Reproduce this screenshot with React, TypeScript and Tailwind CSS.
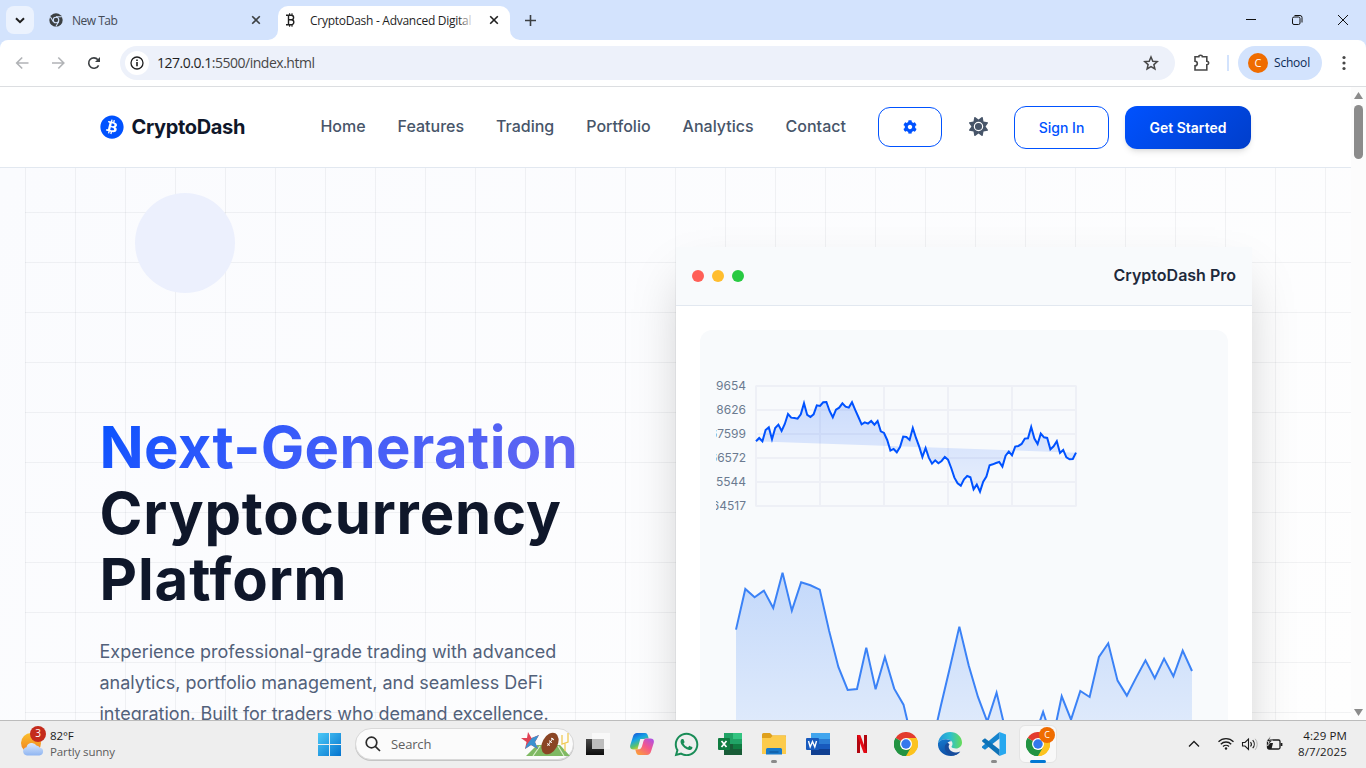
import React from "react";
import { FaBitcoin, FaCog, FaWhatsapp } from "react-icons/fa";
import { FaSun } from "react-icons/fa6";

const UI = "font-['Open_Sans','Noto_Sans',sans-serif]";

const PRICE_Y = [
  243, 233, 243, 209, 201, 237, 203, 193, 212, 191, 161, 172, 173, 175, 162, 129, 164, 170, 162, 135, 137, 126, 125,
  152, 171, 148, 142, 129, 139, 142, 126, 149, 170, 192, 186, 190, 182, 193, 182, 213, 218, 239, 271, 266, 276, 260,
  229, 230, 239, 203, 233, 259, 290, 263, 292, 310, 300, 309, 302, 290, 298, 323, 352, 369, 376, 357, 347, 351, 387,
  373, 394, 364, 349, 315, 312, 308, 305, 319, 286, 274, 285, 259, 257, 251, 235, 234, 200, 235, 251, 220, 231, 233,
  267, 258, 243, 278, 269, 291, 297, 296, 277,
];

const VOLUME_Y = [
  238, 116, 141, 121, 173, 67, 181, 96, 105, 118, 241, 350, 419, 416, 292, 417, 320, 415, 463, 580, 620, 590, 468, 350,
  229, 345, 440, 514, 427, 545, 620, 620, 565, 485, 570, 438, 508, 422, 440, 320, 279, 391, 436, 382, 330, 384, 325,
  378, 301, 362,
];

function PriceChart() {
  const pts = PRICE_Y.map((y, i) => `${(40 + i * 3.2).toFixed(2)},${(y / 3 + 14.3).toFixed(2)}`).join(" ");
  const labels = ["69654", "68626", "67599", "66572", "65544", "64517"];
  return (
    <svg width="496" height="186" className="block overflow-hidden">
      <defs>
        <linearGradient id="price" gradientUnits="userSpaceOnUse" x1="0" y1="40" x2="0" y2="160">
          <stop offset="0" stopColor="#0052ff" stopOpacity="0.2" />
          <stop offset="1" stopColor="#0052ff" stopOpacity="0.05" />
        </linearGradient>
      </defs>
      <g stroke="#eef0f6" strokeWidth="2">
        {[0, 1, 2, 3, 4, 5].map((i) => (
          <React.Fragment key={i}>
            <path d={`M39.500 ${40 + i * 24}H360.500`} />
            <path d={`M${40 + i * 64} 40V160`} />
          </React.Fragment>
        ))}
      </g>
      <g className="font-['Inter',sans-serif]" fontSize="12" fill="#6b7a90" textAnchor="end">
        {labels.map((l, i) => (
          <text key={l} x="30" y={44 + i * 24}>{l}</text>
        ))}
      </g>
      <polygon points={pts} fill="url(#price)" />
      <polyline points={pts} fill="none" stroke="#0052ff" strokeWidth="2" />
    </svg>
  );
}

function VolumeChart() {
  const pts = VOLUME_Y.map((y, i) => `${(20 + i * 9.306).toFixed(2)},${(y / 3 + 18.3).toFixed(2)}`).join(" ");
  return (
    <svg width="496" height="300" className="block">
      <defs>
        <linearGradient id="volume" gradientUnits="userSpaceOnUse" x1="0" y1="20" x2="0" y2="280">
          <stop offset="0" stopColor="#3b82f6" stopOpacity="0.3" />
          <stop offset="1" stopColor="#3b82f6" stopOpacity="0.05" />
        </linearGradient>
      </defs>
      <polygon points={`20,280 ${pts} 476,280`} fill="url(#volume)" />
      <polyline points={pts} fill="none" stroke="#3b82f6" strokeWidth="2" />
    </svg>
  );
}

function Close({ c = "#1f1f1f" }: { c?: string }) {
  return (
    <svg width="10" height="10" viewBox="0 0 10 10" stroke={c} strokeWidth="1.6">
      <path d="M1.2 1.2l7.6 7.6M8.8 1.2L1.2 8.8" />
    </svg>
  );
}

function TabStrip() {
  return (
    <div className={`${UI} flex h-10 shrink-0 items-end bg-[#d3e3fd] text-[12px] text-[#1f1f1f]`}>
      <div className="mb-1.5 ml-1.5 flex size-7 items-center justify-center rounded-lg bg-[#ebf2fe]">
        <svg width="10" height="7" viewBox="0 0 10 7" fill="none" stroke="#1f1f1f" strokeWidth="2"><path d="M1 1.2l4 4 4-4" /></svg>
      </div>
      <div className="mr-4 flex h-10 w-[228px] items-center pl-[15px] text-[#444a55]">
        <svg width="14" height="14" viewBox="0 0 48 48">
          <circle cx="24" cy="24" r="23" fill="#3c4043" />
          <circle cx="24" cy="24" r="9.5" fill="none" stroke="#d3e3fd" strokeWidth="4" />
          <path d="M24 13h20M14.5 29.500l-10-17M33.500 29.500l-10 17" stroke="#d3e3fd" strokeWidth="3.500" />
        </svg>
        <span className="mt-0.5 ml-[9px] flex-1 tracking-[-0.5px]">New Tab</span>
        <span className="mr-px"><Close c="#3c4043" /></span>
      </div>
      <div className="relative flex h-[34px] w-[232px] items-center rounded-t-[10px] bg-white pb-1.5">
        <svg className="absolute bottom-0 -left-2.5" width="10" height="10"><path d="M10 0v10H0A10 10 0 0 0 10 0" fill="#fff" /></svg>
        <svg className="absolute -right-2.5 bottom-0" width="10" height="10"><path d="M0 0v10h10A10 10 0 0 1 0 0" fill="#fff" /></svg>
        <svg className="ml-[8px] shrink-0" width="11" height="14" fill="none" stroke="#1f1f1f" strokeWidth="1.4">
          <path d="M0 2.200h5.300a2.300 2.300 0 0 1 0 4.600H2.500M5.300 6.800a2.500 2.500 0 0 1 0 5H0M2.500 2.200v9.600" />
          <path d="M3.600 .3v2M6 .3v2M3.600 11.800v2M6 11.800v2" strokeWidth="1.100" />
        </svg>
        <span className="relative ml-[13px] mt-[2px] w-[164px] overflow-hidden whitespace-nowrap tracking-[-0.27px]">
          CryptoDash - Advanced Digital A
          <span className="absolute inset-y-0 right-0 w-4 bg-linear-to-r from-white/0 to-white" />
        </span>
        <span className="ml-[15px]"><Close /></span>
      </div>
      <svg className="mb-[14px] ml-[15px]" width="11" height="11" stroke="#3c4043" strokeWidth="1.600"><path d="M5.500 0v11M0 5.500h11" /></svg>
      <div className="ml-auto flex h-10 items-center">
        <svg width="123" height="40" fill="none" stroke="#111">
          <path d="M19 19.500h10" />
          <rect x="65.500" y="17" width="7.500" height="7.500" rx="1.500" />
          <path d="M67.500 15.500h5.500a2 2 0 0 1 2 2v5" />
          <path d="M111 15l10 10M121 15l-10 10" />
        </svg>
        <div className="w-[16px]" />
      </div>
    </div>
  );
}

function Toolbar() {
  return (
    <div className="shrink-0 bg-[#d3e3fd]">
      <div className={`${UI} flex h-[47px] items-start rounded-t-lg border-b border-[#dcdee1] bg-white pt-1.5`}>
        <svg width="120" height="34" fill="none" strokeWidth="1.600">
          <g stroke="#b1b3b6"><path d="M28.500 17H17M22.200 11.500L16.700 17l5.500 5.500M52 17h11.500M58.300 11.500l5.500 5.500-5.500 5.500" /></g>
          <path d="M98.600 19.300a5.200 5.200 0 1 1-.7-5.600" stroke="#3c4043" />
          <path d="M100 11v5h-5z" fill="#3c4043" />
        </svg>
        <div className="flex h-[34px] w-[1055px] items-center rounded-full bg-[#edf1fa] pl-[5px] pr-4">
          <div className="flex size-6 items-center justify-center rounded-full bg-white">
            <svg width="14" height="14" fill="none" stroke="#1f1f1f" strokeWidth="1.300"><circle cx="7" cy="7" r="6" /><path d="M7 6v4.200M7 3.500v1.500" strokeWidth="1.600" /></svg>
          </div>
          <span className="mb-0.5 ml-2 flex-1 text-[14px] tracking-[-0.48px] text-[#474747]"><span className="text-[#1f1f1f]">127.0.0.1</span>:5500/index.html</span>
          <svg width="16" height="16" viewBox="0 0 16 16" fill="none" stroke="#474747" strokeWidth="1.500"><path d="M8 2l1.800 4.200 4.500.4-3.400 3 1 4.400L8 11.600 4.100 14l1-4.400-3.400-3 4.500-.4z" /></svg>
        </div>
        <svg className="ml-[18px]" width="18" height="34" fill="none" stroke="#474747" strokeWidth="1.600"><path d="M2 10.800h3.800a1.800 1.500 0 0 1 3.600 0h4.400v4.400a1.700 1.700 0 0 1 0 3.600v5.200H2v-4.200a2.300 2.300 0 0 0 0-4.600z" /></svg>
        <div className="mt-[9px] ml-4 h-4 w-0.5 bg-[#d3e3fd]" />
        <div className="ml-[9px] flex h-[34px] w-[84px] items-center rounded-full bg-[#d3e3fd] pl-2.5 text-[12px] text-[#0b2a55]">
          <span className="mr-[6px] flex size-5 items-center justify-center rounded-full bg-[#ef6c00] text-[11px] text-white">C</span>
          <span className="tracking-[-0.2px]">School</span>
        </div>
        <svg className="ml-[20px]" width="4" height="34" fill="#474747"><circle cx="2" cy="11.500" r="1.600" /><circle cx="2" cy="17" r="1.600" /><circle cx="2" cy="22.500" r="1.600" /></svg>
      </div>
    </div>
  );
}

function SiteHeader() {
  return (
    <header className="flex h-[81px] shrink-0 items-center border-b border-[#e2e8f0] bg-white pb-px pl-[99.5px] font-['Inter',sans-serif]">
      <FaBitcoin className="mt-px size-6 text-[#0052ff]" />
      <span className="mt-px ml-2 w-[188.5px] text-[20px] font-bold tracking-[-0.35px] text-[#0f172a]">CryptoDash</span>
      <nav className="mb-px flex w-[526px] gap-8 pb-px pl-[0.4px] text-[16px] font-medium text-[#475569]">
        <a>Home</a><a>Features</a><a>Trading</a><a>Portfolio</a><a>Analytics</a><a>Contact</a>
      </nav>
      <button className="ml-8 flex h-10 w-16 items-center justify-center rounded-xl border border-[#0052ff] text-[#0052ff]"><FaCog className="size-[14px]" /></button>
      <button className="ml-4 flex size-10 items-center justify-center text-[#475569]"><FaSun className="size-[19px]" /></button>
      <button className="mt-0.5 ml-4 h-[43px] w-[95px] rounded-xl border border-[#0052ff] text-[14px] font-medium text-[#0052ff]">Sign In</button>
      <button className="mt-0.5 ml-4 h-[43px] w-[126px] rounded-xl bg-linear-135 from-[#0052ff] to-[#003ecb] text-[14px] font-semibold text-white shadow-md">Get Started</button>
    </header>
  );
}

function Hero() {
  return (
    <main className="relative flex min-h-0 flex-1 overflow-hidden bg-linear-135 from-[#fafbfe] to-[#fefefe] font-['Inter',sans-serif]">
      <div className="absolute inset-y-0 right-0 left-[25px] bg-[linear-gradient(to_right,rgba(15,23,42,0.05)_1px,transparent_1px),linear-gradient(to_bottom,rgba(15,23,42,0.05)_1px,transparent_1px)] bg-size-[50px_50px] bg-position-[0px_44px]" />
      <div className="absolute top-[25px] left-[135px] size-[100px] rounded-full bg-[#ecf0fd]" />
      <section className="relative ml-[99.5px] w-[576.5px] shrink-0 pt-[246px]">
        <h1 className="text-[58px] leading-[66px] font-bold whitespace-nowrap text-[#0f172a]">
          <span className="block w-fit bg-linear-135 from-[#0052ff] to-[#6366f1] bg-clip-text tracking-[0.35px] text-transparent">Next-Generation</span>
          <span className="block tracking-[0.85px]">Cryptocurrency</span>
          <span className="block tracking-[0.9px]">Platform</span>
        </h1>
        <p className="mt-[25.4px] w-[500px] text-[18px] leading-[30.6px] whitespace-nowrap text-[#52617a]">
          Experience professional-grade trading with advanced<br />analytics, portfolio management, and seamless DeFi<br />integration. Built for traders who demand excellence.
        </p>
      </section>
      <section className="relative mt-[79px] h-[800px] w-[576px] shrink-0 bg-white shadow-[0_25px_50px_-12px_rgba(0,0,0,0.25)]">
        <div className="flex h-[59px] items-center gap-2 border-b border-[#e2e8f0] bg-[#f8fafc] px-4">
          <i className="size-3 rounded-full bg-[#ff5f57]" />
          <i className="size-3 rounded-full bg-[#ffbd2e]" />
          <i className="size-3 rounded-full bg-[#28ca42]" />
          <span className="mb-0.5 ml-auto text-[16px] font-semibold text-[#1e293b]">CryptoDash Pro</span>
        </div>
        <div className="mx-6 mt-6 rounded-xl bg-[#f8fafc] p-4">
          <PriceChart />
          <VolumeChart />
        </div>
      </section>
    </main>
  );
}

function Scrollbar() {
  return (
    <div className="flex w-[15px] flex-col items-center bg-[#fcfcfc]">
      <svg className="mt-[5px]" width="9" height="8"><path d="M4.500 0L9 7H0z" fill="#8b8b8b" /></svg>
      <div className="mt-[5px] h-[54px] w-[9px] rounded-full bg-[#8b8b8b]" />
      <svg className="mt-auto mb-[4px]" width="9" height="8"><path d="M4.500 8L9 1H0z" fill="#8b8b8b" /></svg>
    </div>
  );
}

function Task({ children, run }: { children: React.ReactNode; run?: boolean }) {
  return (
    <div className="relative flex h-full w-11 items-center justify-center pb-px">
      {children}
      {run && <span className="absolute bottom-[5px] h-[3px] w-1.5 rounded-full bg-[#8a8a8a]" />}
    </div>
  );
}

function Chrome() {
  return (
    <svg width="24" height="24" viewBox="0 0 48 48">
      <path d="M24 24L3.200 12A24 24 0 0 1 44.800 12z" fill="#e33b2e" />
      <path d="M24 24L44.800 12A24 24 0 0 1 24 48z" fill="#fcc31e" />
      <path d="M24 24V48A24 24 0 0 1 3.200 12z" fill="#229342" />
      <path d="M24 12H44.800L40 20H24z" fill="#e33b2e" />
      <path d="M24 12H44.800A24 24 0 0 1 24 48L34.400 30z" fill="#fcc31e" />
      <path d="M3.200 12L13.600 30A12 12 0 0 0 34.400 30L24 48A24 24 0 0 1 3.200 12z" fill="#229342" />
      <circle cx="24" cy="24" r="12" fill="#fff" />
      <circle cx="24" cy="24" r="9.500" fill="#3478ec" />
    </svg>
  );
}

function Taskbar() {
  return (
    <footer className={`${UI} flex h-12 shrink-0 items-center border-t border-[#bcbcbc] bg-[#eeeeee]`}>
      <div className="relative ml-[20px] w-[30px]">
        <svg width="25" height="28" viewBox="0 0 25 28">
          <defs>
            <linearGradient id="sun" x2="0" y2="1"><stop stopColor="#fbc02d" /><stop offset="1" stopColor="#ef7d20" /></linearGradient>
            <linearGradient id="cloud" x2="0" y2="1"><stop stopColor="#dce9fb" /><stop offset="1" stopColor="#8fb5f2" /></linearGradient>
          </defs>
          <circle cx="11" cy="12" r="10" fill="url(#sun)" />
          <path d="M7 24.500a4.200 4.200 0 0 1-.5-8.300A5.500 5.500 0 0 1 16.500 14.500a4.500 4.500 0 0 1 3.500 2.300A3.900 3.900 0 0 1 19.500 24.500z" fill="url(#cloud)" />
        </svg>
        <span className="absolute -top-[5px] left-[10px] flex size-4 items-center justify-center rounded-full bg-[#c42b1c] text-[10px] text-white">3</span>
      </div>
      <div className="mb-0.5 w-[259px] text-[11.5px] leading-4 tracking-[-0.1px]"><div className="text-[#1b1b1b]">82°F</div><div className="text-[#5c5c5c]">Partly sunny</div></div>
      <div className="flex h-full w-[46px] items-center pl-[9px]">
        <svg width="23" height="23" viewBox="0 0 23 23">
          <defs><linearGradient id="win" x2="1" y2="1" gradientUnits="objectBoundingBox"><stop stopColor="#4cc9f7" /><stop offset="1" stopColor="#0473ce" /></linearGradient></defs>
          <path d="M0 0h11v11H0zM12 0h11v11H12zM0 12h11v11H0zM12 12h11v11H12z" fill="url(#win)" />
        </svg>
      </div>
      <div className="mb-px flex h-8 w-[219px] items-center rounded-full border border-[#d9d9d9] bg-[#fbfbfb] pl-[9px] shadow-[0_1px_0_#c5c5c5]">
        <svg width="16" height="16" fill="none" stroke="#2b2b2b" strokeWidth="1.700"><circle cx="6.500" cy="6.500" r="5.300" /><path d="M10.300 10.300L15 15" /></svg>
        <span className="mt-px ml-[10px] flex-1 text-[13px] tracking-[-0.15px] text-[#606060]">Search</span>
        <svg className="mr-[1px]" width="52" height="26" viewBox="0 0 52 26">
          <path d="M17 14H40L50 25H6z" fill="#7fb963" />
          <path d="M20 15l-7 10M38 15l6 10" stroke="#d9edc9" strokeWidth="1.2" />
          <path d="M8 1l3.500 6L19 4l-4 7 3 7-7-4-6 4 1.500-7L1 7h6z" fill="#e04254" />
          <path d="M12 7l7-3-4 7 3 7-7-4-6 4 1.500-4z" fill="#3b91cf" />
          <ellipse cx="30" cy="12.500" rx="7.600" ry="11.500" fill="#8a4524" transform="rotate(28 30 12.500)" />
          <path d="M27.500 15L33 7M27 12.500l3 2M29 9.700l3 2M31 7l3 2" stroke="#fff" strokeWidth="1" />
          <path d="M42 4v9l6-2V2M45 12v8" fill="none" stroke="#f0ca55" strokeWidth="1.3" />
        </svg>
      </div>
      <div className="ml-[2px] flex h-full">
        <Task>
          <svg width="24" height="24"><defs><linearGradient id="tv" x2="0" y2="1"><stop stopColor="#4b4b4b" /><stop offset="1" stopColor="#0d0d0d" /></linearGradient></defs><path d="M0 7h18v16H0z" fill="url(#tv)" /><path d="M6 1h18v16H6z" fill="#f8f8f8" /><path d="M6 7h12v10H6z" fill="#bdbdbd" /></svg>
        </Task>
        <Task>
          <svg width="24" height="22" viewBox="0 0 24 22">
            <defs>
              <linearGradient id="c1" x2=".5" y2="1"><stop stopColor="#1748d5" /><stop offset=".45" stopColor="#16a5e6" /><stop offset=".75" stopColor="#5fc36a" /><stop offset="1" stopColor="#f6cf1d" /></linearGradient>
              <linearGradient id="c2" x1="1" x2=".2" y2="1"><stop stopColor="#a64ff0" /><stop offset=".5" stopColor="#f4578c" /><stop offset="1" stopColor="#fb9d3c" /></linearGradient>
            </defs>
            <path d="M7 0h8c2 0 2.600 1.500 3 3l.7 2.400H16c-1.500 0-2.300.8-2.800 2.300L11 14.500C10.500 16 9.500 16.500 8 16.500H3.500C.7 16.500-.4 14.500.3 12L3 3.500C3.600 1.300 5 0 7 0z" fill="url(#c1)" />
            <path d="M17 22H9c-2 0-2.600-1.500-3-3l-.7-2.500H8c1.500 0 2.500-.6 3-2.100l2.200-6.700c.5-1.500 1.300-2.200 2.800-2.200h4.500c2.800 0 3.900 2 3.200 4.500L21 18.500c-.6 2.200-2 3.500-4 3.500z" fill="url(#c2)" />
            <path d="M10.300 6h5c-1 .3-1.500 1-1.800 2L12 13.300c-.3 1.200-.9 2.200-2.200 2.700H8.300c-.6 0-.7-.5-.5-1.100z" fill="#f3eef2" />
          </svg>
        </Task>
        <Task><FaWhatsapp className="size-[27px] text-[#198c57]" /></Task>
        <Task>
          <svg width="24" height="22"><path d="M6 0h9v11H6z" fill="#21a366" /><path d="M15 0h9v6h-9z" fill="#33c481" /><path d="M15 6h9v5h-9z" fill="#21a366" /><path d="M6 11h9v11H6z" fill="#185c37" /><path d="M15 11h9v5h-9z" fill="#107c41" /><path d="M6 16h18v6H6z" fill="#185c37" /><rect y="5" width="12" height="12" rx="1" fill="#107c41" /><path d="M3.500 8l5 6M8.500 8l-5 6" stroke="#fff" strokeWidth="1.700" /></svg>
        </Task>
        <Task run>
          <svg width="24" height="22"><path d="M0 1.500A1.500 1.500 0 0 1 1.500 0H8l2.500 2.500H24V21H0z" fill="#dfa01c" /><path d="M0 5h8.500L11 2.500h11.500A1.500 1.500 0 0 1 24 4v17H0z" fill="#fccb4c" /><path d="M4 21.500v-5A1.500 1.500 0 0 1 5.500 15h13a1.500 1.500 0 0 1 1.500 1.500v5z" fill="#1979c9" /><path d="M7.500 19h9" stroke="#0f5ca5" strokeWidth="1.500" /></svg>
        </Task>
        <Task>
          <svg width="24" height="22"><path d="M5 0h19v6H5z" fill="#41a5ee" /><path d="M5 6h19v5H5z" fill="#2b7cd3" /><path d="M5 11h19v5H5z" fill="#185abd" /><path d="M5 16h19v6H5z" fill="#103f91" /><rect y="5" width="13" height="12" rx="1" fill="#185abd" /><path d="M2.500 8l1.700 6 2.300-5.500L8.800 14l1.700-6" fill="none" stroke="#fff" strokeWidth="1.400" /></svg>
        </Task>
        <Task>
          <svg width="10" height="18"><path d="M0 0h3v18H0zM7 0h3v18H7z" fill="#b1060f" /><path d="M0 0h3.300L10 18H6.700z" fill="#e50914" /></svg>
        </Task>
        <Task><Chrome /></Task>
        <Task>
          <svg width="24" height="24" viewBox="0 0 24 24">
            <defs>
              <linearGradient id="e1" x2="1"><stop stopColor="#2493dd" /><stop offset=".5" stopColor="#2cbfd0" /><stop offset="1" stopColor="#67dc57" /></linearGradient>
              <linearGradient id="e2" y2="1" x2=".4"><stop stopColor="#1578cd" /><stop offset="1" stopColor="#0f4fa5" /></linearGradient>
            </defs>
            <path d="M0 11C1 4.500 6 0 12 0c7 0 12 5 12 10.500 0 3.600-2.700 6-6 6-2.300 0-4.500-.7-4.500-1.700 0-.7 1-1.200 1-3 0-2.800-2.700-4.500-6-4.500C4.500 7.300 1.200 9 0 11z" fill="url(#e1)" />
            <path d="M0 11c1.200-2 4.500-3.700 8-3.700 2.500 0 4.500.8 5.500 2C10 9 7.700 12 8.200 15.500 8.800 19.800 13 22 17 21.500c2-.2 3.700-1 5-1.700C20 22.500 16.500 24 13 24 5.500 24-.8 18.500 0 11z" fill="url(#e2)" />
            <path d="M9.500 10.500C7 12 6 15 7.500 18.500c1.800 4 6.500 5.500 10 4.500 2-.6 3.700-2 4.800-3.500-4.300 2.200-9.300.8-11-2.500-1-2-.7-3.700.2-4.800z" fill="#174c9c" />
          </svg>
        </Task>
        <Task run>
          <svg width="24" height="24" viewBox="0 0 24 24"><path d="M17.500 0L24 2.500v19L17.500 24z" fill="#27a8ef" /><path d="M17.500 0v6.500L3 17.700 0 15.800v-1.200z" fill="#1684ce" /><path d="M17.500 24v-6.500L3 6.300.2 8.200v1.200z" fill="#0e72b7" /></svg>
        </Task>
        <Task>
          <div className="relative flex size-[38px] items-center justify-center rounded-md border border-[#e4e4e4] bg-[#f8f8f8]">
            <Chrome />
            <span className="absolute top-px right-[1px] flex size-4 items-center justify-center rounded-full bg-[#ef6c00] text-[9px] text-white">C</span>
            <span className="absolute -bottom-px h-[3px] w-4 rounded-full bg-[#0078d4]" />
          </div>
        </Task>
      </div>
      <svg className="mr-[11px] mb-0.5 ml-auto" width="102" height="24" fill="none" stroke="#1b1b1b" strokeWidth="1.300">
        <path d="M5 14.500l5-5 5 5" />
        <path d="M34.500 9.800a10.500 10.500 0 0 1 15 0M36.800 12.200a7.300 7.300 0 0 1 10.400 0M39 14.500a4.300 4.300 0 0 1 6 0" />
        <circle cx="42" cy="16.500" r="1.200" fill="#1b1b1b" stroke="none" />
        <path d="M58.500 10.500h2.500l3.500-3.500v10.500l-3.500-3.500h-2.500zM66.500 10a3.500 3.500 0 0 1 0 4.500M68.700 8.200a6 6 0 0 1 0 8" strokeWidth="1.100" />
        <path d="M71.200 6.800a8.500 8.500 0 0 1 0 11" stroke="#b5b5b5" strokeWidth="1" />
        <rect x="83.500" y="8" width="12.500" height="9" rx="1.500" />
        <path d="M97.500 11v3" strokeWidth="1.800" />
        <path d="M84 11h5l-1.500 6H84z" fill="#1b1b1b" stroke="none" />
        <path d="M86.500 4l-4 5.500h2.700L83.500 14l5-6h-3z" fill="#1b1b1b" stroke="#eee" strokeWidth=".6" />
      </svg>
      <div className="mr-[19px] mb-0.5 w-[50px] text-right text-[11.5px] leading-4 text-[#1b1b1b]"><div className="tracking-[0.1px]">4:29 PM</div><div className="tracking-[0.15px]">8/7/2025</div></div>
    </footer>
  );
}

export default function App() {
  return (
    <div className="flex h-[768px] w-[1366px] flex-col overflow-hidden bg-white">
      <TabStrip />
      <Toolbar />
      <div className="flex min-h-0 flex-1">
        <div className="flex min-w-0 flex-1 flex-col"><SiteHeader /><Hero /></div>
        <Scrollbar />
      </div>
      <Taskbar />
    </div>
  );
}
